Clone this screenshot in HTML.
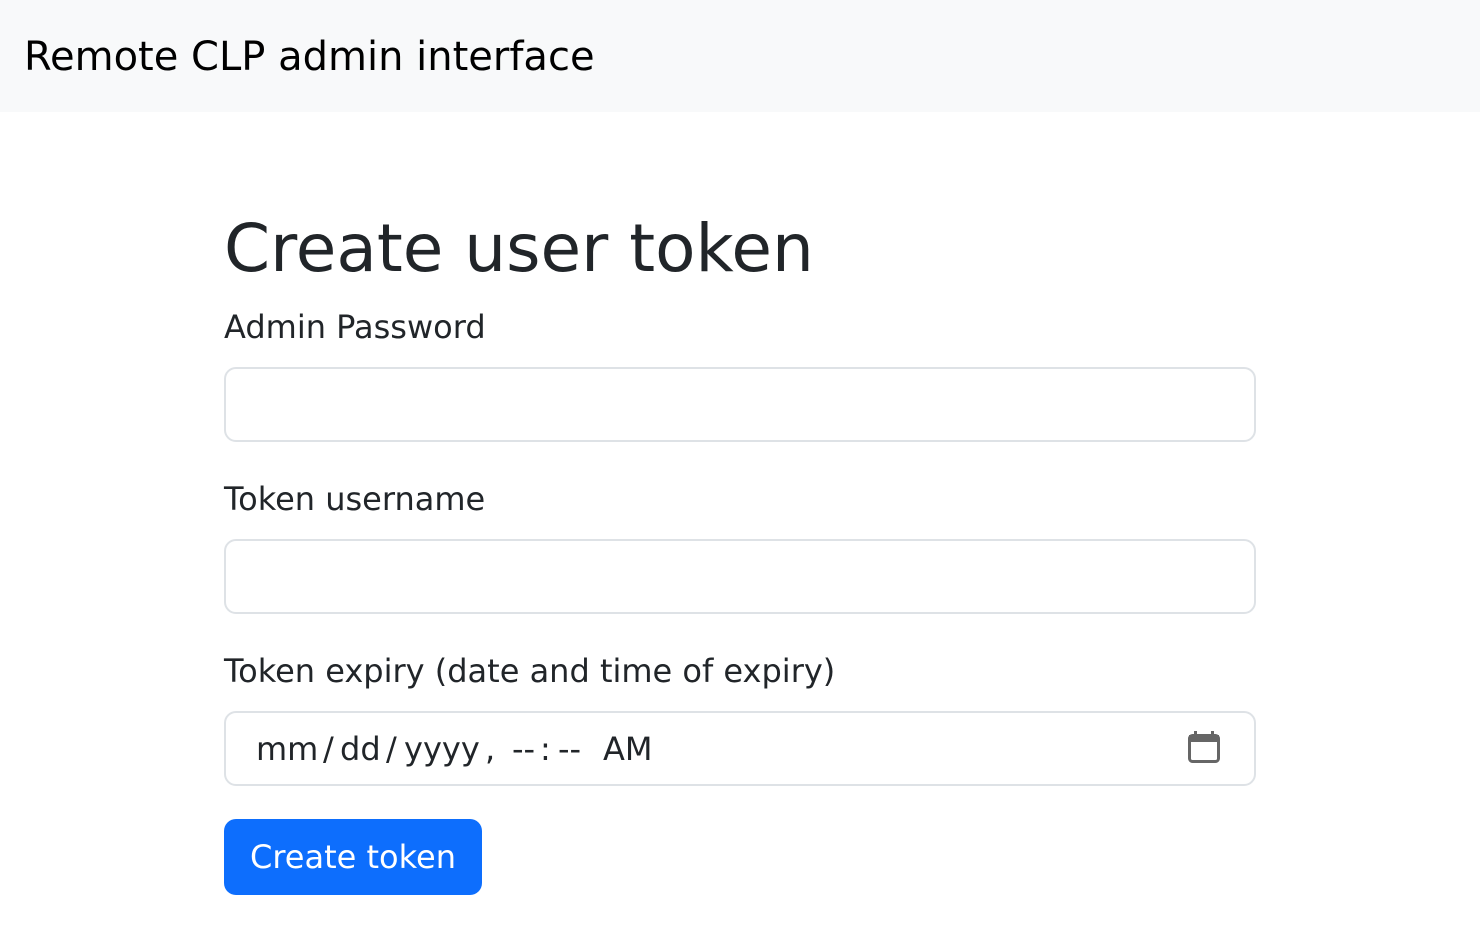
<!DOCTYPE html>
<html><head><style>
*{box-sizing:border-box;margin:0;padding:0}
body{width:1480px;height:930px;background:#fff;font-family:"DejaVu Sans","Liberation Sans",sans-serif;color:#212529;position:relative;overflow:hidden}
.nav{position:absolute;left:0;top:0;width:1480px;height:112px;background:#f8f9fa}
.brand{position:absolute;left:24px;top:29px;font-size:40px;line-height:56px;color:#000}
h1{position:absolute;left:224px;top:207px;font-size:66px;font-weight:500;line-height:84px}
.lbl{position:absolute;left:224px;font-size:32px;line-height:44px}
.inp{position:absolute;left:224px;width:1032px;height:75px;border:2px solid #dee2e6;border-radius:12px;background:#fff}
.d{position:absolute;top:727px;font-size:32px;line-height:44px;color:#212529}
.btn{position:absolute;left:224px;top:819px;width:258px;height:76px;background:#0d6efd;border-radius:12px;color:#fff;font-size:32px;line-height:76px;text-align:center}
</style></head><body>
<div class="nav"><div class="brand">Remote CLP admin interface</div></div>
<h1>Create user token</h1>
<div class="lbl" style="top:305px">Admin Password</div>
<div class="inp" style="top:367px"></div>
<div class="lbl" style="top:477px">Token username</div>
<div class="inp" style="top:539px"></div>
<div class="lbl" style="top:649px">Token expiry (date and time of expiry)</div>
<div class="inp" style="top:711px"></div>
<span class="d" style="left:256px">mm</span>
<span class="d" style="left:323px">/</span>
<span class="d" style="left:340px">dd</span>
<span class="d" style="left:386px">/</span>
<span class="d" style="left:404px">yyyy</span>
<span class="d" style="left:485px">,</span>
<span class="d" style="left:512px">--</span>
<span class="d" style="left:540px">:</span>
<span class="d" style="left:558px">--</span>
<span class="d" style="left:603px">AM</span>
<svg style="position:absolute;left:1187px;top:730px" width="34" height="34" viewBox="0 0 34 34">
<rect x="2.5" y="5.5" width="29" height="26" rx="3" fill="none" stroke="#666" stroke-width="3"/>
<rect x="2" y="5" width="30" height="7" fill="#666"/>
<rect x="7" y="1" width="3" height="7" fill="#666"/>
<rect x="24" y="1" width="3" height="7" fill="#666"/>
</svg>
<div class="btn">Create token</div>
</body></html>
